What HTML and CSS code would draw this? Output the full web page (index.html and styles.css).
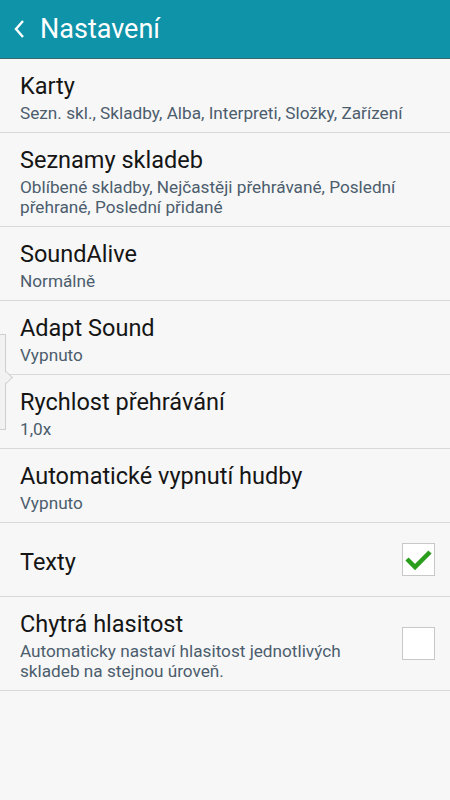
FILE: index.html
```html
<!DOCTYPE html>
<html lang="cs">
<head>
    <meta charset="UTF-8">
    <meta name="viewport" content="width=device-width, initial-scale=1.0">
    <title>Nastavení</title>
    <link rel="stylesheet" href="styles.css">
</head>
<body>

    <div class="header">
        <svg class="back" width="14" height="22" viewBox="0 0 14 22">
            <path d="M11 3 L4 11 L11 19" fill="none" stroke="#fff" stroke-width="2.4"/>
        </svg>
        <h1>Nastavení</h1>
    </div>

    <div class="list">
        <div class="row">
            <div class="text">
                <div class="title">Karty</div>
                <div class="sub">Sezn. skl., Skladby, Alba, Interpreti, Složky, Zařízení</div>
            </div>
        </div>
        <div class="row">
            <div class="text">
                <div class="title">Seznamy skladeb</div>
                <div class="sub">Oblíbené skladby, Nejčastěji přehrávané, Poslední přehrané, Poslední přidané</div>
            </div>
        </div>
        <div class="row">
            <div class="text">
                <div class="title">SoundAlive</div>
                <div class="sub">Normálně</div>
            </div>
        </div>
        <div class="row">
            <div class="text">
                <div class="title">Adapt Sound</div>
                <div class="sub">Vypnuto</div>
            </div>
        </div>
        <div class="row">
            <div class="text">
                <div class="title">Rychlost přehrávání</div>
                <div class="sub">1,0x</div>
            </div>
        </div>
        <div class="row">
            <div class="text">
                <div class="title">Automatické vypnutí hudby</div>
                <div class="sub">Vypnuto</div>
            </div>
        </div>
        <div class="row">
            <div class="text">
                <div class="title">Texty</div>
            </div>
            <div class="check on">
                <svg width="31" height="31" viewBox="0 0 31 31">
                    <path d="M4 15 L12 23 L27 8" fill="none" stroke="#2a9d1c" stroke-width="4.5"/>
                </svg>
            </div>
        </div>
        <div class="row">
            <div class="text">
                <div class="title">Chytrá hlasitost</div>
                <div class="sub">Automaticky nastaví hlasitost jednotlivých skladeb na stejnou úroveň.</div>
            </div>
            <div class="check"></div>
        </div>
    </div>

    <!-- side handle -->
    <div class="handle"></div>

</body>
</html>
```

FILE: styles.css
```css
body {
    font-family: Roboto, "Noto Sans", Arial, sans-serif;
    background-color: #f7f7f7;
    color: #111;
    margin: 0;
    padding: 0;
}

.header {
    display: flex;
    align-items: center;
    height: 58px;
    background-color: #0f93a9;
    border-bottom: 1px solid #3c6870;
    padding-left: 12px;
}

.header .back {
    margin-right: 14px;
}

.header h1 {
    margin: 0;
    color: #fff;
    font-size: 27px;
    font-weight: 400;
}

.row {
    display: flex;
    align-items: center;
    min-height: 74px;
    padding: 0 15px 0 20px;
    border-bottom: 1px solid #d9d9d9;
    box-sizing: border-box;
}

.text {
    flex: 1;
    padding: 13px 0 9px;
}

.title {
    font-size: 23.5px;
    line-height: 28px;
    color: #151515;
}

.sub {
    margin-top: 3px;
    font-size: 17.2px;
    line-height: 20px;
    color: #4c5d6d;
}

.check {
    width: 31px;
    height: 31px;
    border: 1px solid #c8c8c8;
    background-color: #fff;
    margin-left: 10px;
}

.check svg {
    display: block;
}

.handle {
    position: absolute;
    left: 0;
    top: 334px;
    width: 5px;
    height: 94px;
    border: 1px solid #cfcfcf;
    border-left: none;
    background-color: #f2f2f2;
}

.handle::after {
    content: "";
    position: absolute;
    top: 38px;
    right: -6px;
    width: 8px;
    height: 8px;
    background-color: #f2f2f2;
    border-top: 1px solid #cfcfcf;
    border-right: 1px solid #cfcfcf;
    transform: rotate(45deg);
}
```
